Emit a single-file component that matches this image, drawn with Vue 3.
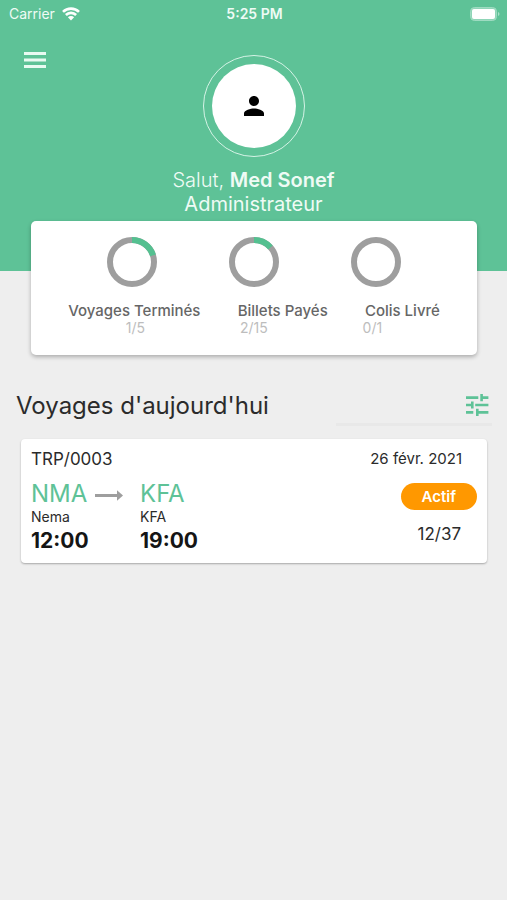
<script setup>
const radius = 22
const circumference = 2 * Math.PI * radius

const stats = [
  { label: 'Voyages Terminés', done: 1, total: 5 },
  { label: 'Billets Payés', done: 2, total: 15 },
  { label: 'Colis Livré', done: 0, total: 1 },
]

const trips = [
  {
    id: 'TRP/0003',
    date: '26 févr. 2021',
    from: { code: 'NMA', city: 'Nema', time: '12:00' },
    to: { code: 'KFA', city: 'KFA', time: '19:00' },
    status: 'Actif',
    seats: '12/37',
  },
]

const dash = (s) => `${(s.done / s.total) * circumference} ${circumference}`
</script>

<template>
  <div class="screen">
    <header class="hero">
      <div class="status-bar">
        <div class="carrier">
          <span>Carrier</span>
          <svg class="wifi" viewBox="0 0 18 14" aria-hidden="true">
            <path d="M1 4.900a11.300 11.300 0 0 1 16 0" />
            <path d="M3.900 8a7.200 7.200 0 0 1 10.200 0" />
            <path class="solid" d="M9 13.6 5.9 10.3a4.4 4.4 0 0 1 6.2 0z" />
          </svg>
        </div>
        <span class="clock">5:25 PM</span>
        <svg class="battery" viewBox="0 0 30 14" aria-hidden="true">
          <rect class="shell" x="0.5" y="0.5" width="26" height="13" rx="4" />
          <rect class="charge" x="2" y="2" width="23" height="10" rx="2" />
          <path class="tip" d="M28 5c2 .8 2 3.200 0 4z" />
        </svg>
      </div>

      <button class="icon-button menu" type="button" aria-label="Menu">
        <svg viewBox="0 0 24 16" aria-hidden="true">
          <path d="M1 1.500h22M1 8h22M1 14.500h22" />
        </svg>
      </button>

      <div class="avatar">
        <div class="avatar-disc">
          <svg viewBox="4 4 16 16" aria-hidden="true">
            <path d="M12 12c2.210 0 4-1.790 4-4s-1.790-4-4-4-4 1.790-4 4 1.790 4 4 4zm0 2c-2.670 0-8 1.340-8 4v2h16v-2c0-2.660-5.330-4-8-4z" />
          </svg>
        </div>
      </div>

      <p class="greeting">Salut, <strong>Med Sonef</strong></p>
      <p class="greeting role">Administrateur</p>
    </header>

    <main>
      <section class="summary">
        <div class="rings">
          <svg v-for="s in stats" :key="s.label" class="ring" viewBox="0 0 50 50" aria-hidden="true">
            <circle class="track" cx="25" cy="25" :r="radius" />
            <circle
              v-if="s.done"
              class="progress"
              cx="25"
              cy="25"
              :r="radius"
              :stroke-dasharray="dash(s)"
              transform="rotate(-90 25 25)"
            />
          </svg>
        </div>
        <div class="labels">
          <span v-for="s in stats" :key="s.label">{{ s.label }}</span>
        </div>
        <div class="values">
          <span v-for="s in stats" :key="s.label">{{ s.done }}/{{ s.total }}</span>
        </div>
      </section>

      <div class="section-head">
        <h1>Voyages d'aujourd'hui</h1>
        <div class="filter">
          <button class="icon-button tune" type="button" aria-label="Filtrer">
            <svg viewBox="0 0 24 24" aria-hidden="true">
              <path d="M1 4.600h12.300M16.600 1v7.200M16.600 4.600h6.800M1 12h6.300M7.300 8.400v7.200M10.200 12h13.200M1 19.400h7.300M12.300 15.800v7.200M12.300 19.400h11.100" />
            </svg>
          </button>
        </div>
      </div>

      <article v-for="t in trips" :key="t.id" class="trip">
        <div class="trip-top">
          <span class="trip-id">{{ t.id }}</span>
          <span class="date">{{ t.date }}</span>
        </div>
        <div class="trip-body">
          <div class="stop origin">
            <div class="code-row">
              <span class="code">{{ t.from.code }}</span>
              <svg class="arrow" viewBox="0 0 28 16" aria-hidden="true">
                <path class="shaft" d="M0 9.500h23" />
                <path class="head" d="M22 4.300l6 5.200-6 5.200z" />
              </svg>
            </div>
            <span class="city">{{ t.from.city }}</span>
            <span class="time">{{ t.from.time }}</span>
          </div>
          <div class="stop">
            <span class="code">{{ t.to.code }}</span>
            <span class="city">{{ t.to.city }}</span>
            <span class="time">{{ t.to.time }}</span>
          </div>
          <div class="state">
            <span class="badge">{{ t.status }}</span>
            <span class="seats">{{ t.seats }}</span>
          </div>
        </div>
      </article>
    </main>
  </div>
</template>

<style>
body {
  background: #eeeeee;
}
</style>

<style scoped>
.screen {
  min-height: 100vh;
  background: #eeeeee;
  color: #2b2b2b;
  font-family: Inter, "Liberation Sans", sans-serif;
}

.hero {
  display: flex;
  flex-direction: column;
  align-items: center;
  padding-bottom: 55px;
  background: #5ec297;
  color: #effbf5;
}

.status-bar {
  display: grid;
  grid-template-columns: 1fr auto 1fr;
  align-items: center;
  align-self: stretch;
  height: 27px;
  padding: 0 7px 0 9px;
  box-sizing: border-box;
  font-size: 14px;
}

.carrier {
  display: flex;
  align-items: center;
  gap: 7px;
}

.wifi {
  width: 18px;
  height: 14px;
  fill: none;
  stroke: #ffffff;
  stroke-width: 2.6;
}

.wifi .solid {
  fill: #ffffff;
  stroke: none;
}

.clock {
  font-weight: 600;
}

.battery {
  justify-self: end;
  width: 30px;
  height: 14px;
}

.shell {
  fill: #8fd5b7;
  stroke: #9edbc1;
}

.charge {
  fill: #ffffff;
}

.tip {
  fill: #a9dfc8;
}

.icon-button {
  display: flex;
  padding: 0;
  border: 0;
  background: none;
}

.menu {
  align-self: flex-start;
  margin: 25px 0 0 23px;
}

.menu svg {
  width: 24px;
  height: 16px;
  fill: none;
  stroke: #e9faf2;
  stroke-width: 3;
}

.avatar {
  display: flex;
  width: 102px;
  height: 102px;
  margin-top: -13px;
  box-sizing: border-box;
  border: 1px solid #d5f3e6;
  border-radius: 50%;
}

.avatar-disc {
  display: flex;
  align-items: center;
  justify-content: center;
  width: 84px;
  height: 84px;
  margin: auto;
  border-radius: 50%;
  background: #ffffff;
}

.avatar-disc svg {
  width: 20px;
  height: 20px;
  fill: #000000;
}

.greeting {
  margin: 11px 0 0;
  font-size: 20px;
  line-height: 24px;
  font-weight: 300;
}

.greeting strong {
  font-weight: 600;
}

.role {
  margin: 0;
  font-weight: 400;
}

.summary {
  margin: -50px 30px 0 31px;
  padding: 16px 0 19px;
  border-radius: 5px;
  background: #ffffff;
  box-shadow: 0 2px 4px rgba(0, 0, 0, 0.28);
}

.rings {
  display: flex;
  justify-content: center;
  gap: 72px;
}

.ring {
  width: 50px;
  height: 50px;
  fill: none;
  stroke-width: 6;
}

.track {
  stroke: #9e9e9e;
}

.progress {
  stroke: #54c090;
}

.labels,
.values {
  display: flex;
  justify-content: space-evenly;
}

.labels {
  margin-top: 14px;
  font-size: 15px;
  line-height: 19px;
  font-weight: 500;
  color: #666666;
}

.values {
  font-size: 14px;
  line-height: 16px;
  color: #bdbdbd;
}

.section-head {
  display: flex;
  align-items: flex-start;
  justify-content: space-between;
  padding: 35px 15px 0 16px;
}

h1 {
  margin: 0;
  font-size: 24px;
  line-height: 32px;
  font-weight: 400;
}

.filter {
  display: flex;
  justify-content: flex-end;
  width: 156px;
  padding: 3px 3px 6px 0;
  box-sizing: border-box;
  border-bottom: 3px solid #e8e8e8;
}

.tune svg {
  width: 24px;
  height: 24px;
  fill: none;
  stroke: #5ec297;
  stroke-width: 2.6;
}

.trip {
  margin: 13px 20px 0 21px;
  padding: 10px 10px 8px;
  border-radius: 4px;
  background: #ffffff;
  box-shadow: 0 1px 2px rgba(0, 0, 0, 0.3);
}

.trip-top {
  display: flex;
  align-items: center;
  justify-content: space-between;
  padding-right: 15px;
  line-height: 20px;
}

.trip-id {
  font-size: 17px;
}

.date {
  font-size: 15px;
}

.trip-body {
  display: flex;
  margin-top: 12px;
}

.stop {
  display: flex;
  flex-direction: column;
}

.origin {
  width: 109px;
}

.code-row {
  display: flex;
  align-items: center;
  gap: 8px;
}

.code {
  font-size: 24px;
  line-height: 26px;
  color: #5ec297;
}

.arrow {
  width: 28px;
  height: 16px;
}

.shaft {
  stroke: #9e9e9e;
  stroke-width: 3;
}

.head {
  fill: #9e9e9e;
}

.city {
  font-size: 14px;
  line-height: 20px;
}

.time {
  font-size: 21px;
  line-height: 28px;
  font-weight: 700;
  color: #151515;
}

.state {
  display: flex;
  flex-direction: column;
  align-items: flex-end;
  margin-left: auto;
  padding-top: 2px;
}

.badge {
  padding: 0 21px;
  border-radius: 14px;
  background: #ff9800;
  color: #ffffff;
  font-size: 15px;
  line-height: 27px;
  font-weight: 600;
}

.seats {
  margin-top: 14px;
  padding-right: 16px;
  font-size: 17px;
  line-height: 20px;
}
</style>
